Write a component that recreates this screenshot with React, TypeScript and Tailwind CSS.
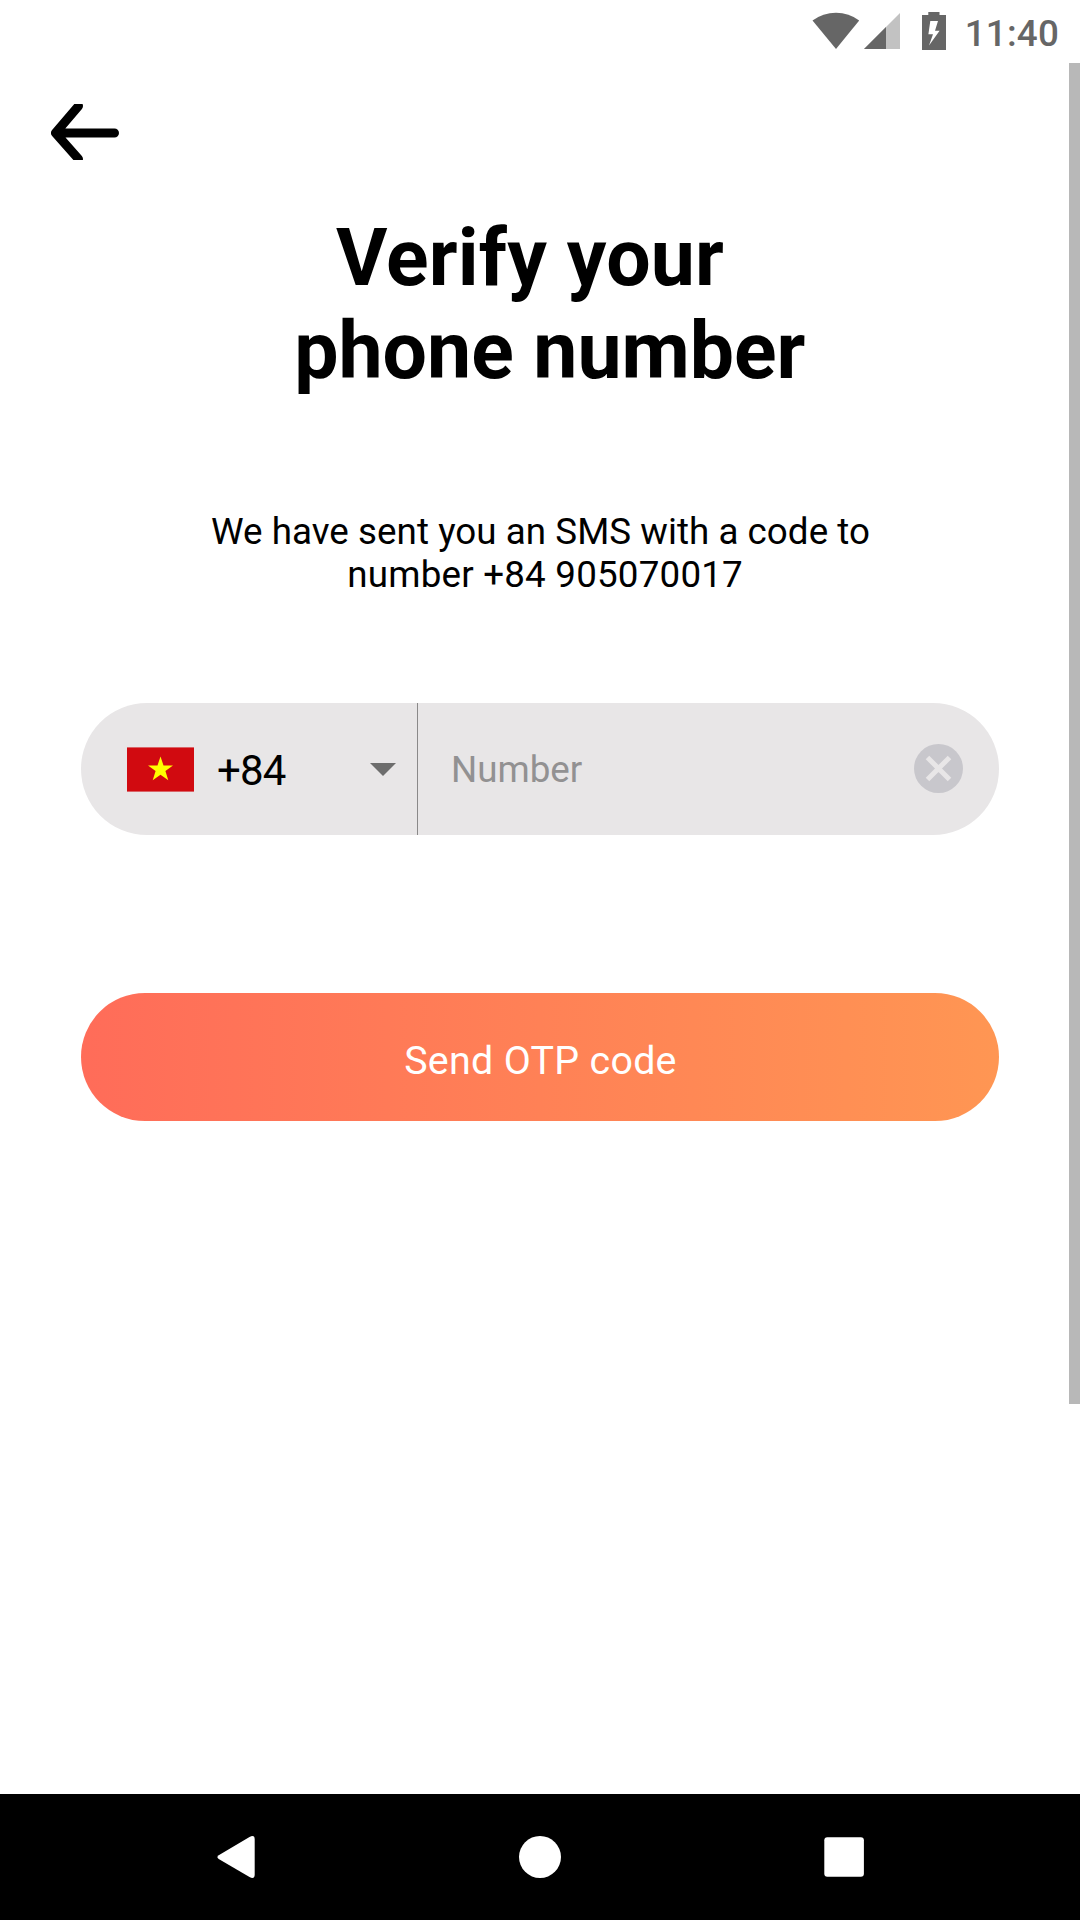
function StatusBar() {
  return (
    <header className="flex h-[63px] items-start justify-end">
      <svg className="mr-[4.7px] h-[63px] w-[155px]" viewBox="805 0 155 63">
        <path d="M812.5 20.5Q823 12.7 836 12.7T859.2 20.5L836 49Z" fill="#666" />
        <path d="M900 13V49H864Z" fill="#c2c2c2" />
        <path d="M886 27V49H864Z" fill="#666" />
        <path
          d="M922 15H928.3V12H939.5V15H946V50H922ZM930.3 21L928.4 34.3H933L929 45.5L939.6 30.8H935L938 21Z"
          fill="#666"
          fillRule="evenodd"
        />
      </svg>
      <time className="mt-[12px] mr-[21px] text-[36.75px] leading-[43px] font-medium tracking-[0.2px] text-[#666]">11:40</time>
    </header>
  );
}

function NavBar() {
  return (
    <nav className="h-[126px] bg-black">
      <svg className="h-full w-full" viewBox="0 0 1080 126" fill="#fff">
        <path d="M218.7 61.2L249.5 43Q254.7 40.3 254.7 45.5V80.5Q254.7 85.7 249.5 83L218.7 65Q216.1 63 218.7 61.2Z" />
        <circle cx="540" cy="63" r="21" />
        <rect x="824.3" y="43.2" width="39.6" height="39.6" rx="3" />
      </svg>
    </nav>
  );
}

export default function App() {
  return (
    <div className="relative flex h-[1920px] w-[1080px] flex-col bg-white font-['Roboto',sans-serif] text-black">
      <StatusBar />
      <main className="flex flex-1 flex-col">
        <button className="mt-[41px] ml-[51px] h-[56px] w-[69px]" aria-label="Back">
          <svg className="h-full w-full" viewBox="51 104 69 56" fill="none" stroke="#000" strokeWidth="9" strokeLinecap="round" strokeLinejoin="round">
            <path d="M78.5 106L55.5 133L78.5 159M57 133H114.5" />
          </svg>
        </button>
        <h1 className="mt-[52px] text-center text-[78.75px] leading-[92.5px] font-bold whitespace-pre">
          <span className="tracking-[0.2px]">{"Verify your "}</span>
          {"\n phone number"}
        </h1>
        <p className="mt-[113px] pl-px text-center text-[36.75px] leading-[43px] whitespace-pre">
          <span className="tracking-[0.04px]">We have sent you an SMS with a code to</span>
          {"\n"}
          <span className="tracking-[0.2px]"> number +84 905070017</span>
        </p>
        <div className="mx-[81px] mt-[107px] flex h-[132px] items-center rounded-full bg-[#e8e6e7]">
          <button className="flex h-full w-[337px] items-center border-r border-[#8a8989] pl-[46px]">
            <svg className="h-[45px] w-[67px]" viewBox="127 747 67 45">
              <path d="M127 747H194V792H127Z" fill="#d96468" />
              <path d="M127 748H194V791H127Z" fill="#d10a10" />
              <path d="M160.5 756.5L163.5 765.4H173L165.4 771.1L168.3 780.3L160.5 774.7L152.7 780.3L155.6 771.1L148 765.4H157.5Z" fill="#ff0" />
            </svg>
            <span className="mt-[2px] ml-[23px] text-[42px] leading-[49px] tracking-[-0.9px]">+84</span>
            <svg className="mr-[21.5px] ml-auto h-[13px] w-[26px]" viewBox="0 0 26 13">
              <path d="M0 0H26L13 13Z" fill="#6d6d6d" />
            </svg>
          </button>
          <span className="ml-[33px] flex-1 text-[36.75px] leading-[43px] text-[#929192]">Number</span>
          <svg className="mr-[36px] mb-[2px] h-[49px] w-[49px]" viewBox="0 0 49 49">
            <circle cx="24.5" cy="24.5" r="24.5" fill="#c8c7cc" />
            <path d="M13.5 13.5L35.5 35.5M35.5 13.5L13.5 35.5" stroke="#e8e6e7" strokeWidth="5" />
          </svg>
        </div>
        <button className="mx-[81px] mt-[158px] flex h-[128px] items-center justify-center rounded-full bg-[linear-gradient(90deg,#ff6c59,#ff9653)] pt-[7px] pl-px text-[39.375px] tracking-[0.3px] text-white">
          Send OTP code
        </button>
      </main>
      <NavBar />
      <div className="absolute top-[63px] right-0 h-[1341px] w-[11px] bg-[#b8b8b8]" />
    </div>
  );
}
